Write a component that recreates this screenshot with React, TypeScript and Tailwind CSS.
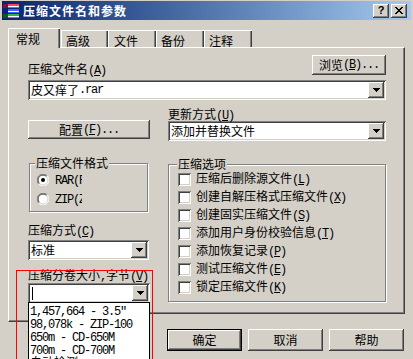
import React from "react";

const raised =
  "shadow-[inset_-1px_-1px_0_#404040,inset_1px_1px_0_#ffffff,inset_-2px_-2px_0_#808080,inset_2px_2px_0_#d4d0c8]";
const sunken =
  "shadow-[inset_1px_1px_0_#808080,inset_-1px_-1px_0_#ffffff,inset_2px_2px_0_#404040,inset_-2px_-2px_0_#d4d0c8]";

const M = ({ children }: { children: React.ReactNode }) => (
  <span className="font-['Liberation_Mono','DejaVu_Sans_Mono',monospace] text-[12px] tracking-[-1.2px]">
    {children}
  </span>
);

const Mn = ({ k }: { k: string }) => (
  <M>
    (<u>{k}</u>)
  </M>
);

const Btn = ({ className = "", children }: { className?: string; children: React.ReactNode }) => (
  <div className={`flex items-center justify-center bg-[#d4d0c8] whitespace-nowrap ${raised} ${className}`}>
    {children}
  </div>
);

const DropBtn = () => (
  <div className={`w-[16px] h-[16px] shrink-0 bg-[#d4d0c8] flex items-center justify-center ${raised}`}>
    <svg width="7" height="4" viewBox="0 0 7 4" shapeRendering="crispEdges">
      <rect x="0" y="0" width="7" height="1" fill="#000" />
      <rect x="1" y="1" width="5" height="1" fill="#000" />
      <rect x="2" y="2" width="3" height="1" fill="#000" />
      <rect x="3" y="3" width="1" height="1" fill="#000" />
    </svg>
  </div>
);

const Combo = ({ className = "", children }: { className?: string; children?: React.ReactNode }) => (
  <div className={`h-[20px] bg-white p-[2px] flex items-center ${sunken} ${className}`}>
    <div className="flex-1 min-w-0 h-full pl-[1px] flex items-center overflow-hidden whitespace-nowrap">
      {children}
    </div>
    <DropBtn />
  </div>
);

const Check = () => <div className={`w-[13px] h-[13px] shrink-0 bg-white ${sunken}`} />;

const Radio = ({ on }: { on?: boolean }) => (
  <svg width="12" height="12" viewBox="0 0 12 12" className="shrink-0">
    <circle cx="6" cy="6" r="5.5" fill="#ffffff" />
    <path d="M10.2 1.8 A5.5 5.5 0 0 0 1.8 10.2" stroke="#808080" strokeWidth="1" fill="none" />
    <path d="M9.5 2.5 A4.6 4.6 0 0 0 2.5 9.5" stroke="#404040" strokeWidth="1" fill="none" />
    <path d="M1.8 10.2 A5.5 5.5 0 0 0 10.2 1.8" stroke="#ffffff" strokeWidth="1" fill="none" />
    <path d="M2.5 9.5 A4.6 4.6 0 0 0 9.5 2.5" stroke="#d4d0c8" strokeWidth="1" fill="none" />
    {on && <circle cx="6" cy="6" r="2" fill="#000" />}
  </svg>
);

const RarIcon = () => (
  <svg width="16" height="16" viewBox="0 0 16 16" shapeRendering="crispEdges" className="shrink-0">
    <rect x="0" y="1" width="16" height="4" fill="#ff3d6e" />
    <rect x="0" y="1" width="5" height="4" fill="#7a1040" />
    <rect x="5" y="3" width="11" height="1" fill="#ffffff" />
    <rect x="0" y="6" width="16" height="4" fill="#3a66ff" />
    <rect x="0" y="6" width="5" height="4" fill="#101a80" />
    <rect x="5" y="8" width="11" height="1" fill="#ffffff" />
    <rect x="0" y="11" width="16" height="4" fill="#38b040" />
    <rect x="0" y="11" width="5" height="4" fill="#0d5a18" />
    <rect x="5" y="13" width="11" height="1" fill="#ffffff" />
  </svg>
);

const TitleBtn = ({ className = "", children }: { className?: string; children: React.ReactNode }) => (
  <div className={`w-[16px] h-[14px] bg-[#d4d0c8] flex items-center justify-center ${raised} ${className}`}>
    {children}
  </div>
);

const options: [string, string][] = [
  ["压缩后删除源文件", "L"],
  ["创建自解压格式压缩文件", "X"],
  ["创建固实压缩文件", "S"],
  ["添加用户身份校验信息", "T"],
  ["添加恢复记录", "P"],
  ["测试压缩文件", "E"],
  ["锁定压缩文件", "K"],
];

const sizes = ['1,457,664 - 3.5"', "98,078k - ZIP-100", "650m - CD-650M", "700m - CD-700M"];

export default function App() {
  return (
    <div className="relative w-[413px] h-[359px] overflow-hidden bg-[#d4d0c8] text-black text-[12px] leading-[12px] font-['Noto_Sans_CJK_SC','Noto_Sans',sans-serif]">
      {/* Title bar */}
      <div className="mx-[2px] mt-[1px] h-[19px] flex items-center pl-[1px] pr-[4px] bg-linear-to-r from-[#0a246a] to-[#a6caf0]">
        <RarIcon />
        <span className="ml-[4px] text-white font-bold tracking-[1px]">压缩文件名和参数</span>
        <div className="flex-1" />
        <TitleBtn>
          <span className="font-['Liberation_Sans',sans-serif] font-bold text-[11px] leading-[11px]">?</span>
        </TitleBtn>
        <TitleBtn className="ml-[2px]">
          <svg width="8" height="7" viewBox="0 0 8 7" shapeRendering="crispEdges">
            <path d="M0 0h2v1h-2zM6 0h2v1h-2zM1 1h2v1h-2zM5 1h2v1h-2zM2 2h4v1h-4zM3 3h2v1h-2zM2 4h4v1h-4zM1 5h2v1h-2zM5 5h2v1h-2zM0 6h2v1h-2zM6 6h2v1h-2z" fill="#000" />
          </svg>
        </TitleBtn>
      </div>

      {/* Tabs */}
      <div className="mt-[8px] ml-[8px] h-[19px] flex items-end">
        <div className="relative z-10 -mb-[1px] h-[20px] w-[52px] pl-[7px] pt-[4px] bg-[#d4d0c8] border-t border-l border-white shadow-[inset_-1px_0_0_#404040,inset_-2px_0_0_#808080]">
          常规
        </div>
        <div className="h-[17px] w-[47px] ml-[1px] pl-[4px] pt-[4px] border-t border-l border-white shadow-[inset_-1px_0_0_#404040,inset_-2px_0_0_#808080]">
          高级
        </div>
        <div className="h-[17px] w-[48px] pl-[5px] pt-[4px] border-t border-l border-white shadow-[inset_-1px_0_0_#404040,inset_-2px_0_0_#808080]">
          文件
        </div>
        <div className="h-[17px] w-[48px] pl-[4px] pt-[4px] border-t border-l border-white shadow-[inset_-1px_0_0_#404040,inset_-2px_0_0_#808080]">
          备份
        </div>
        <div className="h-[17px] w-[48px] pl-[4px] pt-[4px] border-t border-l border-white shadow-[inset_-1px_0_0_#404040,inset_-2px_0_0_#808080]">
          注释
        </div>
      </div>

      {/* Panel */}
      <div className="ml-[8px] w-[397px] h-[267px] border border-t-white border-l-white border-r-[#404040] border-b-[#404040] shadow-[inset_-1px_-1px_0_#808080] pl-[19px] pt-[7px]">
        <div className="w-[358px]">
          <div className="h-[25px] flex justify-between items-start">
            <span className="mt-[8px]">
              压缩文件名<Mn k="A" />
            </span>
            <Btn className="w-[74px] h-[20px]">
              浏览<Mn k="B" />
              <M>...</M>
            </Btn>
          </div>
          <Combo className="w-[358px]">
            皮又痒了<M>.rar</M>
          </Combo>

          <div className="flex gap-[18px] h-[41px]">
            <div className="w-[122px] pt-[20px]">
              <Btn className="w-full h-[19px]">
                配置<Mn k="F" />
                <M>...</M>
              </Btn>
            </div>
            <div className="flex-1 pt-[8px]">
              <div className="h-[12px] mb-[1px]">
                更新方式<Mn k="U" />
              </div>
              <Combo>添加并替换文件</Combo>
            </div>
          </div>

          <div className="flex gap-[18px]">
            {/* left column */}
            <div className="w-[122px] flex flex-col">
              <div className="relative mt-[22px] ml-[1px] w-[119px] h-[49px] border border-[#808080] shadow-[inset_1px_1px_0_#ffffff,1px_1px_0_#ffffff] pt-[6px] pl-[7px]">
                <span className="absolute -top-[7px] left-[5px] px-[1px] bg-[#d4d0c8]">压缩文件格式</span>
                <div className="h-[19px] flex items-center gap-[6px]">
                  <Radio on />
                  <span className="w-[27px] overflow-hidden whitespace-nowrap">
                    <M>RAR(R)</M>
                  </span>
                </div>
                <div className="h-[19px] flex items-center gap-[6px]">
                  <Radio />
                  <span className="w-[27px] overflow-hidden whitespace-nowrap">
                    <M>ZIP(Z)</M>
                  </span>
                </div>
              </div>
              <div className="mt-[12px] h-[12px]">
                压缩方式<Mn k="C" />
              </div>
              <Combo className="mt-[4px] w-[121px]">标准</Combo>
              <div className="mt-[9px] h-[12px] whitespace-nowrap">
                压缩分卷大小<M>,</M>字节<Mn k="V" />
              </div>
              <div className="relative mt-[2px]">
                <Combo className="w-[122px]">
                  <div className="ml-[1px] w-[1px] h-[13px] bg-black" />
                </Combo>
                <div className="absolute z-20 left-0 top-[19px] w-[122px] h-[70px] bg-white border border-black">
                  {sizes.map((s) => (
                    <div key={s} className="h-[13px] leading-[13px] pl-[1px] whitespace-nowrap">
                      <M>{s}</M>
                    </div>
                  ))}
                  <div className="h-[13px] leading-[13px] pl-[1px]">自动检测</div>
                </div>
              </div>
            </div>

            {/* right column */}
            <div className="relative mt-[23px] w-[218px] h-[138px] border border-[#808080] shadow-[inset_1px_1px_0_#ffffff,1px_1px_0_#ffffff] pt-[5px] pl-[9px]">
              <span className="absolute -top-[7px] left-[8px] px-[1px] bg-[#d4d0c8]">压缩选项</span>
              {options.map(([t, k]) => (
                <div key={k} className="h-[18px] flex items-center gap-[5px] whitespace-nowrap">
                  <Check />
                  <span>
                    {t}
                    <Mn k={k} />
                  </span>
                </div>
              ))}
            </div>
          </div>
        </div>
      </div>

      {/* Bottom buttons */}
      <div className="mt-[15px] ml-[167px] flex gap-[6px]">
        <div className="w-[75px] h-[22px] border border-black bg-[#d4d0c8] flex items-center justify-center shadow-[inset_-1px_-1px_0_#404040,inset_1px_1px_0_#ffffff,inset_-2px_-2px_0_#808080]">
          确定
        </div>
        <Btn className="w-[75px] h-[22px]">取消</Btn>
        <Btn className="w-[75px] h-[22px]">帮助</Btn>
      </div>

      {/* pasted-region edge artifact */}
      <div className="absolute left-[8px] top-[312px] w-[20px] h-[10px] bg-[#d4d0c8] border-l border-white border-b border-b-[#404040] shadow-[inset_0_-1px_0_#808080]" />

      {/* red annotation frame */}
      <div className="absolute z-30 left-[16px] top-[270px] w-[137px] h-[100px] border border-[#ff0000] pointer-events-none" />
    </div>
  );
}
